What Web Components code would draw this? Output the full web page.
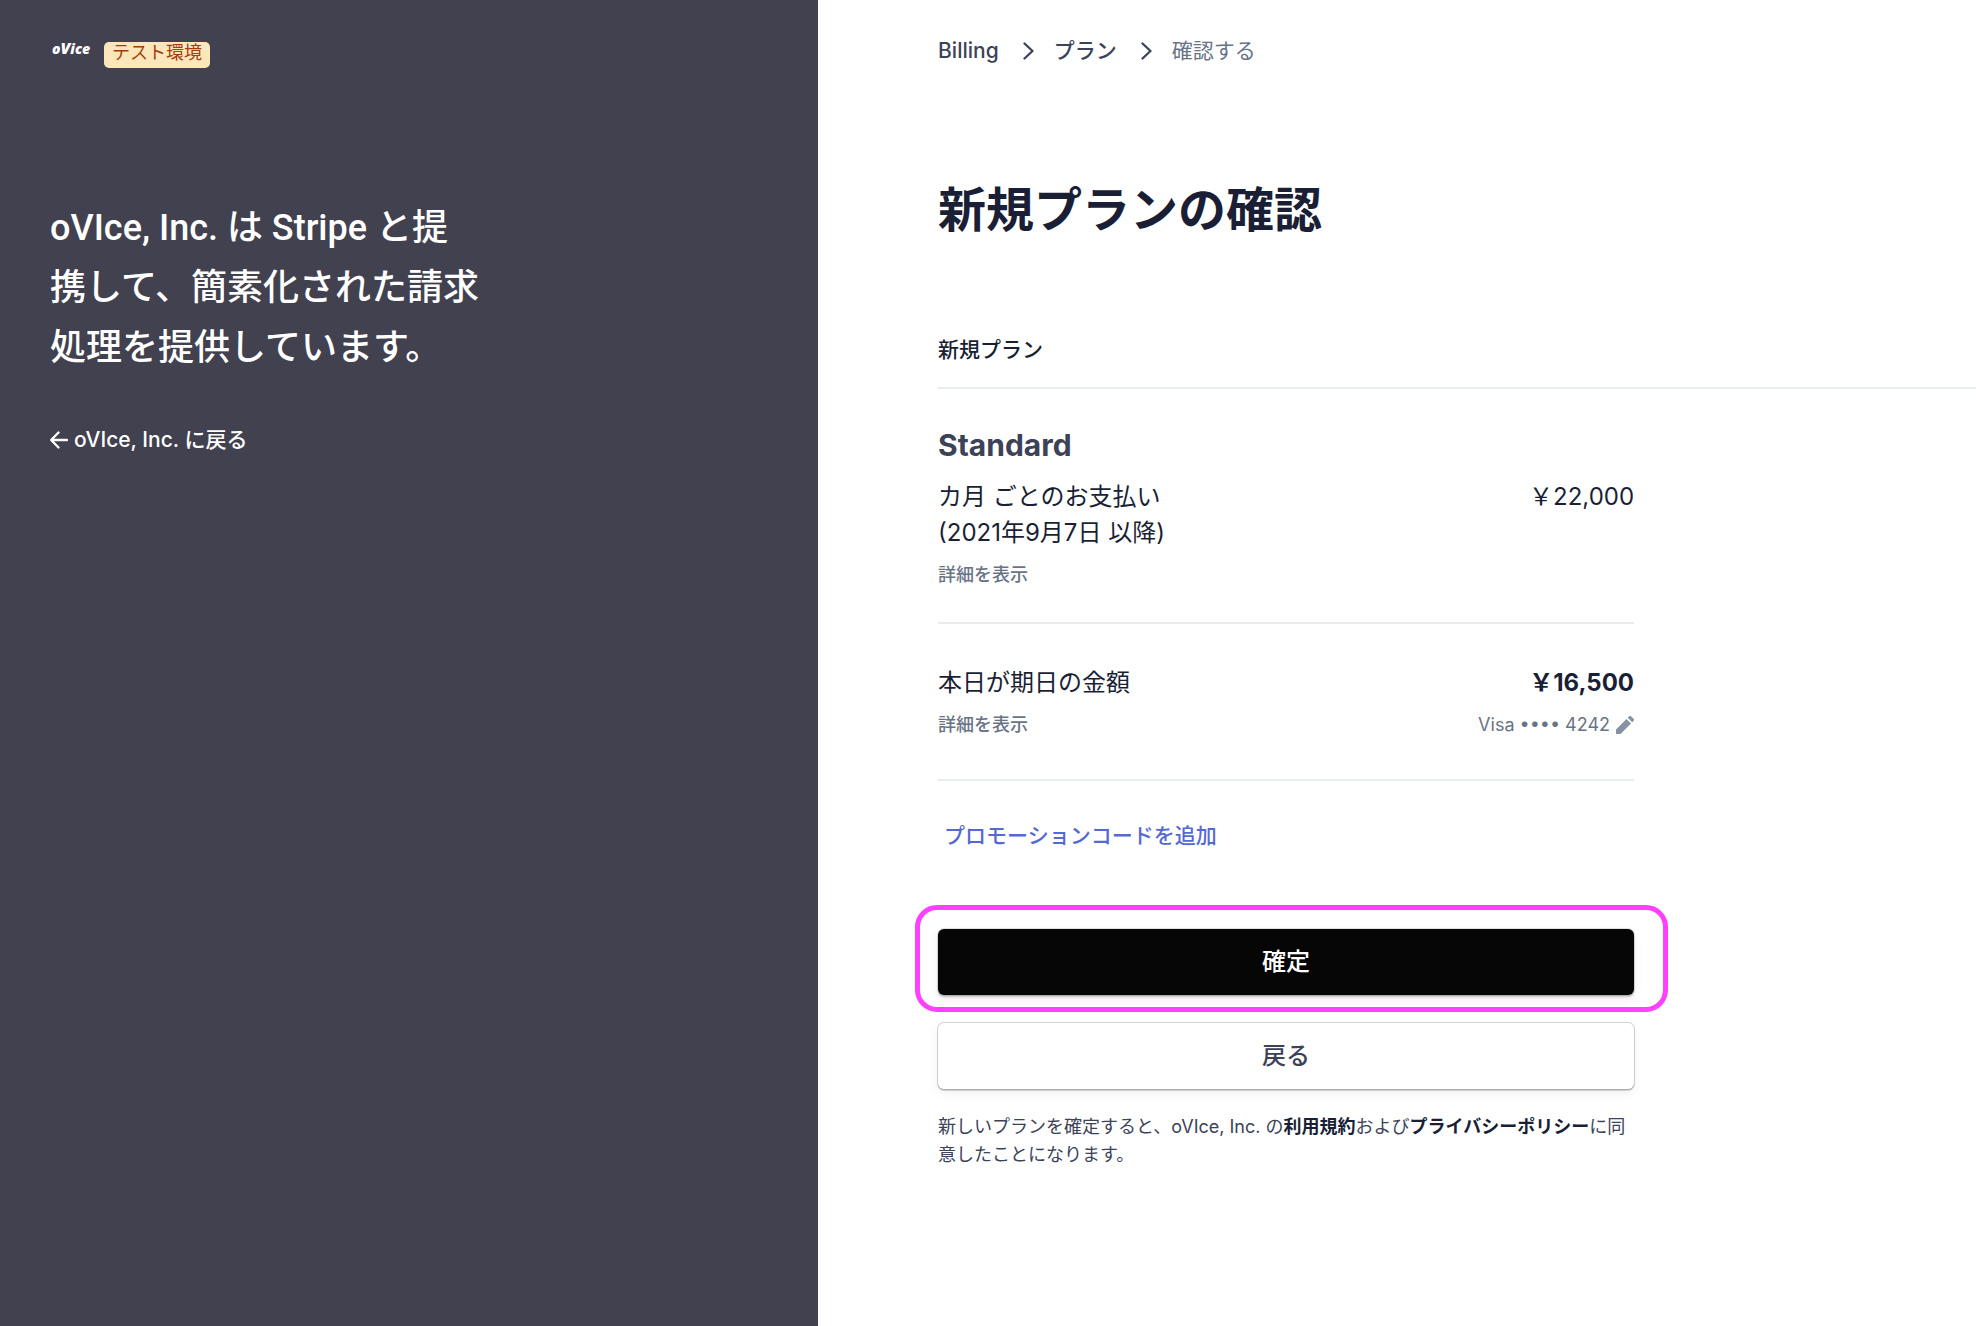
<!DOCTYPE html>
<html lang="ja">
<head>
<meta charset="utf-8">
<meta name="viewport" content="width=device-width, initial-scale=1">
<title>新規プランの確認</title>
<style>
  html, body { margin: 0; min-height: 100%; }
  body {
    --ink: #1a1f36;
    --slate: #3c4257;
    --muted: #697386;
    --line: #e8ebf0;
    font-family: Inter, "Noto Sans CJK JP", sans-serif;
    color: var(--ink);
    background: #fff;
  }
</style>
</head>
<body>
<billing-layout>
  <brand-panel slot="side">
    <test-badge slot="badge">テスト環境</test-badge>
    <span slot="message">oVIce, Inc. は Stripe と提携して、簡素化された請求処理を提供しています。</span>
    <span slot="back">oVIce, Inc. に戻る</span>
  </brand-panel>
  <crumb-trail></crumb-trail>
  <plan-section>
    <span slot="title">新規プランの確認</span>
    <span slot="label">新規プラン</span>
    <plan-item></plan-item>
    <due-today></due-today>
    <promo-code>プロモーションコードを追加</promo-code>
    <confirm-actions></confirm-actions>
    <legal-note></legal-note>
  </plan-section>
</billing-layout>

<script>
const define = (name, markup) => {
  const template = document.createElement('template');
  template.innerHTML = `<style>
    :host { display: block; box-sizing: border-box; }
    a { color: inherit; text-decoration: none; }
    h1, h2, h3, p, ol { margin: 0; padding: 0; font-weight: inherit; }
    button { font: inherit; color: inherit; background: none; border: 0; padding: 0; cursor: pointer; }
    svg { display: block; flex: none; }
  </style>` + markup;
  customElements.define(name, class extends HTMLElement {
    constructor() {
      super();
      this.attachShadow({ mode: 'open' }).append(template.content.cloneNode(true));
    }
  });
};

define('billing-layout', `
  <style>
    :host { display: flex; min-height: 100vh; }
    aside { flex: 0 0 41.4%; background: #424150; color: #fff; display: flex; }
    main { flex: 1; min-width: 0; padding: 35px 0 64px 120px; }
  </style>
  <aside><slot name="side"></slot></aside>
  <main><slot></slot></main>`);

define('brand-panel', `
  <style>
    :host { flex: 1; padding: 38px 50px; }
    header { display: flex; align-items: flex-start; gap: 12px; height: 32px; }
    .logo { font: italic 800 14px/20px "Open Sans", sans-serif; width: 42px; text-align: center; }
    .logo b { font-size: 16px; font-weight: 800; }
    ::slotted([slot=badge]) { margin-top: 4px; }
    .message { margin-top: 128px; max-width: 432px; font-family: Roboto, "Noto Sans CJK JP", sans-serif; font-size: 36px; line-height: 60px; font-weight: 500; }
    .back { display: flex; align-items: center; gap: 6px; margin-top: 46px; font-size: 21px; line-height: 32px; font-weight: 500; }
  </style>
  <header>
    <div class="logo">o<b>V</b>ice</div>
    <slot name="badge"></slot>
  </header>
  <p class="message"><slot name="message"></slot></p>
  <a class="back" href="#">
    <svg width="18" height="18" viewBox="0 0 18 18" fill="none" stroke="currentColor" stroke-width="2.400" stroke-linecap="round" stroke-linejoin="round"><path d="M17 9H1.500M8.500 1.500 1.200 9l7.300 7.500"/></svg>
    <slot name="back"></slot>
  </a>`);

define('test-badge', `
  <style>
    :host { padding: 0 8px; height: 26px; border-radius: 5px; background: #fce7ba; color: #a33c0b; font-size: 18px; line-height: 22px; }
  </style><slot></slot>`);

define('crumb-trail', `
  <style>
    ol { display: flex; align-items: center; list-style: none; font-size: 21px; line-height: 32px; color: var(--slate); font-weight: 500; }
    li { display: flex; align-items: center; }
    svg { margin: 0 20px 0 24px; }
    .current { color: var(--muted); font-weight: 400; }
  </style>
  <nav aria-label="パンくず"><ol>
    <li><a href="#">Billing</a>
      <svg width="11" height="18" viewBox="0 0 11 18" fill="none" stroke="currentColor" stroke-width="2.300" stroke-linecap="round" stroke-linejoin="round"><path d="M1.500 1.500 9.500 9l-8 7.500"/></svg></li>
    <li><a href="#">プラン</a>
      <svg width="11" height="18" viewBox="0 0 11 18" fill="none" stroke="currentColor" stroke-width="2.300" stroke-linecap="round" stroke-linejoin="round"><path d="M1.500 1.500 9.500 9l-8 7.500"/></svg></li>
    <li class="current" aria-current="page">確認する</li>
  </ol></nav>`);

define('plan-section', `
  <style>
    h1 { margin-top: 111px; font-size: 48px; line-height: 64px; font-weight: 700; }
    h2 { margin-top: 92px; padding-bottom: 21px; border-bottom: 2px solid var(--line); font-size: 21px; line-height: 32px; font-weight: 500; }
    .column { max-width: 696px; }
  </style>
  <h1><slot name="title"></slot></h1>
  <h2><slot name="label"></slot></h2>
  <div class="column"><slot></slot></div>`);

define('plan-item', `
  <style>
    :host { padding: 36px 0 33px; border-bottom: 2px solid var(--line); }
    h3 { font-size: 30px; line-height: 40px; font-weight: 700; color: var(--slate); }
    .row { display: flex; justify-content: space-between; margin-top: 14px; font-size: 24px; line-height: 36px; }
    button { display: block; margin-top: 10px; font-size: 18px; line-height: 28px; color: var(--muted); font-weight: 500; }
  </style>
  <h3>Standard</h3>
  <div class="row"><p>カ月 ごとのお支払い<br>(2021年9月7日 以降)</p><span>￥22,000</span></div>
  <button type="button">詳細を表示</button>`);

define('due-today', `
  <style>
    :host { padding: 41px 0 40px; border-bottom: 2px solid var(--line); }
    .row { display: flex; justify-content: space-between; align-items: center; font-size: 24px; line-height: 36px; }
    .sub { margin-top: 10px; font-size: 18px; line-height: 28px; color: var(--muted); }
    strong { font-weight: 700; }
    .details { font-weight: 500; }
    .card { display: flex; align-items: center; gap: 6px; }
  </style>
  <div class="row"><span>本日が期日の金額</span><strong>￥16,500</strong></div>
  <div class="row sub">
    <button class="details" type="button">詳細を表示</button>
    <button class="card" type="button">Visa •••• 4242
      <svg width="18" height="18" viewBox="0 0 18 18" fill="#8792a2"><path d="M0 18v-4.500L10.500 3 15 7.500 4.500 18zM11.700 1.800 13 .5a1.600 1.600 0 0 1 2.300 0l2.200 2.200a1.600 1.600 0 0 1 0 2.300l-1.300 1.300z"/></svg>
    </button>
  </div>`);

define('promo-code', `
  <style>
    :host { padding: 39px 6px 0; }
    button { font-size: 21px; line-height: 32px; font-weight: 500; color: #5469d4; display: block; }
  </style>
  <button type="button"><slot></slot></button>`);

define('confirm-actions', `
  <style>
    :host { display: flex; flex-direction: column; gap: 28px; margin-top: 77px; }
    .highlight { position: relative; display: flex; }
    .highlight::after { content: ""; position: absolute; inset: -24px -34px -17px -23px; border: 5px solid #ff40ff; border-radius: 22px; pointer-events: none; }
    button { flex: 1; border-radius: 6px; font-size: 24px; line-height: 36px; padding: 15px 0; font-weight: 500; }
    .primary { background: #060606; color: #fff; box-shadow: 0 0 0 1px rgba(0,0,0,.1), 0 2px 2px rgba(0,0,0,.2), 0 4px 10px rgba(60,66,87,.1); }
    .secondary { background: #fff; color: var(--slate); box-shadow: 0 0 0 1px rgba(60,66,87,.22), 0 2px 1px rgba(0,0,0,.16), 0 4px 10px rgba(60,66,87,.08); }
  </style>
  <div class="highlight"><button class="primary" type="submit">確定</button></div>
  <button class="secondary" type="button">戻る</button>`);

define('legal-note', `
  <style>
    :host { margin-top: 24px; font-size: 18px; line-height: 28px; color: var(--slate); }
    a { color: var(--ink); font-weight: 600; }
  </style>
  <p>新しいプランを確定すると、oVIce, Inc. の<a href="#">利用規約</a>および<a href="#">プライバシーポリシー</a>に同意したことになります。</p>`);
</script>
</body>
</html>
